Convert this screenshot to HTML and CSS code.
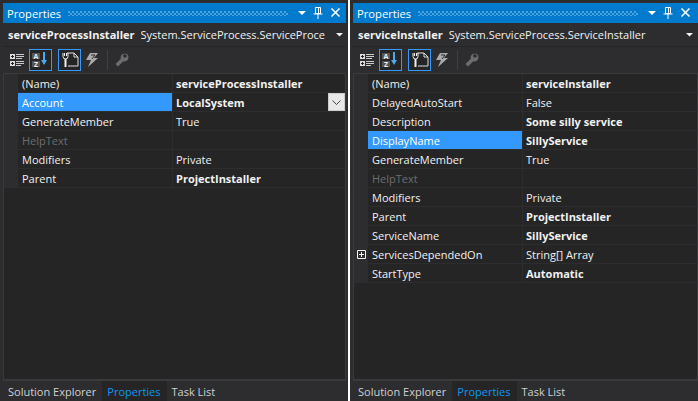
FILE: index.html
```html
<!DOCTYPE html>
<html lang="en">
<head>
    <meta charset="UTF-8">
    <title>Properties</title>
    <link rel="stylesheet" href="styles.css">
</head>
<body>
    <div class="panes">
        <div class="pane">
            <div class="titlebar">
                <span class="title">Properties</span>
                <span class="grip"></span>
                <svg class="tb-icon" width="12" height="12" viewBox="0 0 12 12"><path d="M4 4h8L8 8z" fill="#fff"/></svg>
                <svg class="tb-icon" width="12" height="12" viewBox="0 0 12 12"><path d="M3.500 .5h5v6h-5zM6.500 1v5M1.500 7h9M6 7v5" fill="none" stroke="#fff"/></svg>
                <svg class="tb-icon" width="12" height="12" viewBox="0 0 12 12"><path d="M1.500 1.500l8 8M9.500 1.500l-8 8" stroke="#fff" stroke-width="1.600"/></svg>
            </div>
            <div class="selector">
                <b>serviceProcessInstaller</b>
                <span class="type">System.ServiceProcess.ServiceProce</span>
                <svg class="sel-arrow" width="7" height="4" viewBox="0 0 7 4"><path d="M0 0h7L3.500 3.500z" fill="#f1f1f1"/></svg>
            </div>
            <div class="toolbar">
                <svg class="tool" width="16" height="16" viewBox="0 0 16 16"><path d="M2 2h5v5H2zM2 9h5v5H2z" fill="#ddd"/><path d="M3 4.500h3M4.500 3v3M3 11.500h3M4.500 10v3" stroke="#252526"/><path d="M8 2.500h8M8 4.500h8M8 6.500h6M8 9.500h8M8 11.500h8M8 13.500h5" stroke="#ccc"/></svg>
                <span class="tool-on"><svg width="20" height="18" viewBox="0 0 20 18"><path d="M1 2h8v6H1zM1 10h8v6H1z" fill="#555"/><text class="az" x="5" y="7.500">A</text><text class="az" x="5" y="15.500">Z</text><path d="M13 1v9" stroke="#4aa8ec" stroke-width="2"/><path d="M10 9h6l-3 5z" fill="#4aa8ec"/></svg></span>
                <span class="tool-on second"><svg width="20" height="18" viewBox="0 0 20 18"><path d="M7 2h7l4 4v9H8" fill="none" stroke="#ddd"/><path d="M14 2v4h4" fill="none" stroke="#ddd"/><path d="M3 2v3.500a2.500 2.500 0 0 0 5 0V2M4.500 2v3M6.500 2v3" fill="none" stroke="#eee"/><path d="M4.500 8h2v8h-2z" fill="#eee"/></svg></span>
                <svg class="tool bolt" width="16" height="16" viewBox="0 0 16 16"><path d="M5 1h8L9 6h4L3 15l3-7H1z" fill="#aaa"/><path d="M6 3h4L7 7" fill="none" stroke="#2d2d30"/></svg>
                <span class="sep"></span>
                <svg class="tool" width="16" height="16" viewBox="0 0 16 16"><path d="M10.500 1.500a4 4 0 0 1 4 4 4 4 0 0 1-5.200 3.700L4 14.500 1.500 12l5.300-5.300a4 4 0 0 1 4-5.200l-2 2.500 2 2 2.500-2z" fill="#6d6d6d"/></svg>
            </div>
            <div class="grid">
                <div class="row"><span class="gutter"></span><span class="name">(Name)</span><span class="val bold">serviceProcessInstaller</span></div>
                <div class="row active"><span class="gutter"></span><span class="name">Account</span><span class="val bold">LocalSystem</span><span class="combo"><svg width="9" height="5" viewBox="0 0 9 5"><path d="M.5 .5l4 4 4-4" fill="none" stroke="#444"/></svg></span></div>
                <div class="row"><span class="gutter"></span><span class="name">GenerateMember</span><span class="val">True</span></div>
                <div class="row muted"><span class="gutter"></span><span class="name">HelpText</span><span class="val"></span></div>
                <div class="row"><span class="gutter"></span><span class="name">Modifiers</span><span class="val">Private</span></div>
                <div class="row"><span class="gutter"></span><span class="name">Parent</span><span class="val bold">ProjectInstaller</span></div>
            </div>
            <div class="tabs">
                <span class="tab">Solution Explorer</span>
                <span class="tab current">Properties</span>
                <span class="tab">Task List</span>
            </div>
        </div>

        <div class="pane">
            <div class="titlebar">
                <span class="title">Properties</span>
                <span class="grip"></span>
                <svg class="tb-icon" width="12" height="12" viewBox="0 0 12 12"><path d="M4 4h8L8 8z" fill="#fff"/></svg>
                <svg class="tb-icon" width="12" height="12" viewBox="0 0 12 12"><path d="M3.500 .5h5v6h-5zM6.500 1v5M1.500 7h9M6 7v5" fill="none" stroke="#fff"/></svg>
                <svg class="tb-icon" width="12" height="12" viewBox="0 0 12 12"><path d="M1.500 1.500l8 8M9.500 1.500l-8 8" stroke="#fff" stroke-width="1.600"/></svg>
            </div>
            <div class="selector">
                <b>serviceInstaller</b>
                <span class="type">System.ServiceProcess.ServiceInstaller</span>
                <svg class="sel-arrow" width="7" height="4" viewBox="0 0 7 4"><path d="M0 0h7L3.500 3.500z" fill="#f1f1f1"/></svg>
            </div>
            <div class="toolbar">
                <svg class="tool" width="16" height="16" viewBox="0 0 16 16"><path d="M2 2h5v5H2zM2 9h5v5H2z" fill="#ddd"/><path d="M3 4.500h3M4.500 3v3M3 11.500h3M4.500 10v3" stroke="#252526"/><path d="M8 2.500h8M8 4.500h8M8 6.500h6M8 9.500h8M8 11.500h8M8 13.500h5" stroke="#ccc"/></svg>
                <span class="tool-on"><svg width="20" height="18" viewBox="0 0 20 18"><path d="M1 2h8v6H1zM1 10h8v6H1z" fill="#555"/><text class="az" x="5" y="7.500">A</text><text class="az" x="5" y="15.500">Z</text><path d="M13 1v9" stroke="#4aa8ec" stroke-width="2"/><path d="M10 9h6l-3 5z" fill="#4aa8ec"/></svg></span>
                <span class="tool-on second"><svg width="20" height="18" viewBox="0 0 20 18"><path d="M7 2h7l4 4v9H8" fill="none" stroke="#ddd"/><path d="M14 2v4h4" fill="none" stroke="#ddd"/><path d="M3 2v3.500a2.500 2.500 0 0 0 5 0V2M4.500 2v3M6.500 2v3" fill="none" stroke="#eee"/><path d="M4.500 8h2v8h-2z" fill="#eee"/></svg></span>
                <svg class="tool bolt" width="16" height="16" viewBox="0 0 16 16"><path d="M5 1h8L9 6h4L3 15l3-7H1z" fill="#aaa"/><path d="M6 3h4L7 7" fill="none" stroke="#2d2d30"/></svg>
                <span class="sep"></span>
                <svg class="tool" width="16" height="16" viewBox="0 0 16 16"><path d="M10.500 1.500a4 4 0 0 1 4 4 4 4 0 0 1-5.200 3.700L4 14.500 1.500 12l5.300-5.300a4 4 0 0 1 4-5.200l-2 2.500 2 2 2.500-2z" fill="#6d6d6d"/></svg>
            </div>
            <div class="grid">
                <div class="row"><span class="gutter"></span><span class="name">(Name)</span><span class="val bold">serviceInstaller</span></div>
                <div class="row"><span class="gutter"></span><span class="name">DelayedAutoStart</span><span class="val">False</span></div>
                <div class="row"><span class="gutter"></span><span class="name">Description</span><span class="val bold">Some silly service</span></div>
                <div class="row active"><span class="gutter"></span><span class="name">DisplayName</span><span class="val bold">SillyService</span></div>
                <div class="row"><span class="gutter"></span><span class="name">GenerateMember</span><span class="val">True</span></div>
                <div class="row muted"><span class="gutter"></span><span class="name">HelpText</span><span class="val"></span></div>
                <div class="row"><span class="gutter"></span><span class="name">Modifiers</span><span class="val">Private</span></div>
                <div class="row"><span class="gutter"></span><span class="name">Parent</span><span class="val bold">ProjectInstaller</span></div>
                <div class="row"><span class="gutter"></span><span class="name">ServiceName</span><span class="val bold">SillyService</span></div>
                <div class="row"><span class="gutter"><svg width="9" height="9" viewBox="0 0 9 9"><path d="M.5 .5h8v8h-8zM2 4.500h5M4.500 2v5" fill="none" stroke="#f1f1f1"/></svg></span><span class="name">ServicesDependedOn</span><span class="val">String[] Array</span></div>
                <div class="row"><span class="gutter"></span><span class="name">StartType</span><span class="val bold">Automatic</span></div>
            </div>
            <div class="tabs">
                <span class="tab">Solution Explorer</span>
                <span class="tab current">Properties</span>
                <span class="tab">Task List</span>
            </div>
        </div>
    </div>
</body>
</html>
```

FILE: styles.css
```css
* {
    box-sizing: border-box;
}
body {
    margin: 0;
    width: 698px;
    height: 401px;
    overflow: hidden;
    background-color: #fff;
    font-family: "Open Sans", "Noto Sans", sans-serif;
    font-size: 11px;
    color: #f1f1f1;
}
.panes {
    display: flex;
    gap: 2px;
    height: 401px;
}
.pane {
    width: 348px;
    display: flex;
    flex-direction: column;
    background-color: #2d2d30;
    padding: 3px 2px 0 3px;
}
.pane + .pane {
    flex: 1;
    width: auto;
    padding-right: 0;
}
.pane + .pane .titlebar {
    padding-right: 6px;
}
.pane + .pane .selector {
    padding-right: 5px;
}
.titlebar {
    height: 20px;
    flex: none;
    display: flex;
    align-items: center;
    gap: 6px;
    background-color: #007acc;
    padding: 0 4px;
    color: #fff;
}
.title {
    margin-right: 1px;
    font-size: 11.2px;
}
.grip {
    flex: 1;
    height: 5px;
    background-image: radial-gradient(circle at 1px 1px, #4fa3dc .7px, transparent 1px), radial-gradient(circle at 1px 1px, #4fa3dc .7px, transparent 1px);
    background-size: 4px 4px;
    background-position: 0 0, 2px 2px;
}
.selector {
    height: 24px;
    flex: none;
    display: flex;
    align-items: center;
    padding: 0 3px 0 5px;
    border-bottom: 1px solid #252526;
    white-space: nowrap;
    overflow: hidden;
}
.selector b {
    margin-right: 6px;
}
.type {
    flex: 1;
    overflow: hidden;
}
.sel-arrow {
    flex: none;
    margin-left: 4px;
}
.toolbar {
    height: 26px;
    flex: none;
    display: flex;
    align-items: center;
    padding-left: 5px;
}
.tool-on {
    display: flex;
    align-items: center;
    justify-content: center;
    width: 23px;
    height: 22px;
    margin-left: 5px;
    border: 1px solid #3399ff;
    background-color: #252526;
}
.tool-on.second {
    margin-left: 6px;
}
.az {
    font-size: 7px;
    font-weight: bold;
    fill: #eee;
    text-anchor: middle;
}
.tool.bolt {
    margin-left: 4px;
}
.sep {
    width: 1px;
    height: 20px;
    margin: 0 6px;
    background-color: #3f3f46;
}
.grid {
    flex: 1;
    background-color: #252526;
    border: 1px solid #3a3a3d;
    border-bottom-width: 2px;
    min-height: 0;
}
.row {
    display: flex;
    height: 19px;
    border-bottom: 1px solid #2d2d30;
    line-height: 20px;
}
.gutter {
    width: 14px;
    flex: none;
    display: flex;
    align-items: center;
    justify-content: center;
    background-color: #2d2d30;
}
.name {
    width: 155px;
    flex: none;
    padding-left: 4px;
    border-right: 1px solid #2d2d30;
}
.val {
    flex: 1;
    padding-left: 3px;
}
.bold {
    font-weight: bold;
}
.row.active .name {
    background-color: #3399ff;
    color: #fff;
}
.row.muted .name {
    color: #6d6d6d;
}
.combo {
    width: 17px;
    flex: none;
    display: flex;
    align-items: center;
    justify-content: center;
    background-color: #e8e8e8;
    border: 1px solid #ccc;
}
.tabs {
    height: 20px;
    flex: none;
    display: flex;
}
.tab {
    padding: 0 6px 0 5px;
    line-height: 21px;
    color: #d0d0d0;
}
.tab.current {
    background-color: #252526;
    color: #0e97f0;
}
```
